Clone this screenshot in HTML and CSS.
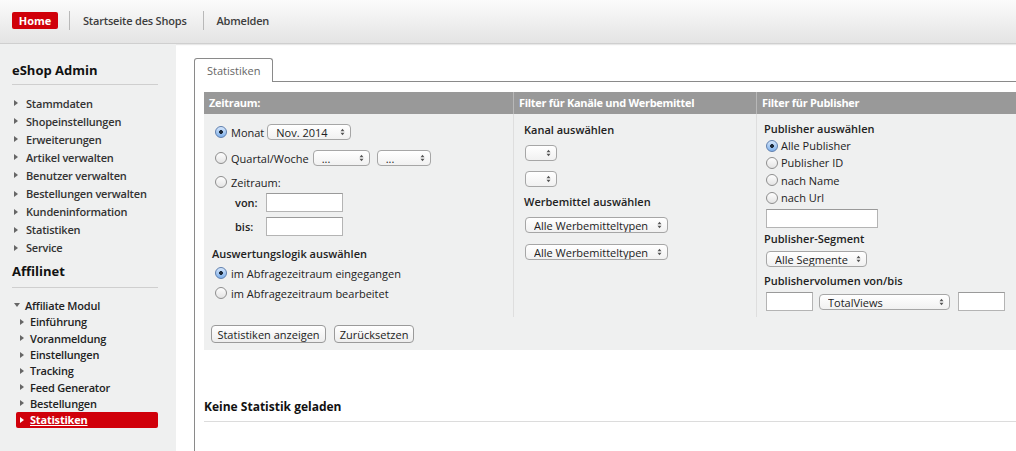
FILE: index.html
```html
<!DOCTYPE html>
<html lang="de">
<head>
<meta charset="utf-8">
<title>eShop Admin – Statistiken</title>
<link rel="stylesheet" href="styles.css">
</head>
<body>
<header class="topbar">
  <a class="home" href="#">Home</a>
  <span class="sep"></span>
  <a class="toplink" href="#">Startseite des Shops</a>
  <span class="sep sep2"></span>
  <a class="toplink" href="#">Abmelden</a>
</header>
<div class="layout">
  <aside class="sidebar">
    <h2 class="side-title first">eShop Admin</h2>
    <ul class="menu">
      <li><span class="tri"></span>Stammdaten</li>
      <li><span class="tri"></span>Shopeinstellungen</li>
      <li><span class="tri"></span>Erweiterungen</li>
      <li><span class="tri"></span>Artikel verwalten</li>
      <li><span class="tri"></span>Benutzer verwalten</li>
      <li><span class="tri"></span>Bestellungen verwalten</li>
      <li><span class="tri"></span>Kundeninformation</li>
      <li><span class="tri"></span>Statistiken</li>
      <li><span class="tri"></span>Service</li>
    </ul>
    <h2 class="side-title second">Affilinet</h2>
    <div class="module"><span class="tri-down"></span>Affiliate Modul</div>
    <ul class="submenu">
      <li><span class="tri"></span>Einführung</li>
      <li><span class="tri"></span>Voranmeldung</li>
      <li><span class="tri"></span>Einstellungen</li>
      <li><span class="tri"></span>Tracking</li>
      <li><span class="tri"></span>Feed Generator</li>
      <li><span class="tri"></span>Bestellungen</li>
      <li class="active"><span class="tri"></span><a href="#">Statistiken</a></li>
    </ul>
  </aside>
  <main class="main">
    <div class="tabstrip"><div class="tab">Statistiken</div><div class="tabline"></div></div>
    <div class="tabpanel">
      <form class="filter">
        <div class="grid">
          <div class="hd">Zeitraum:</div>
          <div class="hd">Filter für Kanäle und Werbemittel</div>
          <div class="hd">Filter für Publisher</div>

          <div class="col col-time">
            <label class="row r1"><input type="radio" name="zr" checked><span class="lbl">Monat</span>
              <span class="sel w83"><select><option>Nov. 2014</option></select><svg class="arr" viewBox="0 0 5 8" width="5" height="8"><path d="M0.5 3.2 2.5 0.8 4.5 3.2ZM0.5 4.8 2.5 7.2 4.5 4.8Z"/></svg></span></label>
            <label class="row r2"><input type="radio" name="zr"><span class="lbl">Quartal/Woche</span>
              <span class="sel w57"><select><option>...</option></select><svg class="arr" viewBox="0 0 5 8" width="5" height="8"><path d="M0.5 3.2 2.5 0.8 4.5 3.2ZM0.5 4.8 2.5 7.2 4.5 4.8Z"/></svg></span>
              <span class="sel w54 gap"><select><option>...</option></select><svg class="arr" viewBox="0 0 5 8" width="5" height="8"><path d="M0.5 3.2 2.5 0.8 4.5 3.2ZM0.5 4.8 2.5 7.2 4.5 4.8Z"/></svg></span></label>
            <label class="row r3"><input type="radio" name="zr"><span class="lbl">Zeitraum:</span></label>
            <div class="daterow d1"><span class="dl">von:</span><input class="txt w77" type="text"></div>
            <div class="daterow d2"><span class="dl">bis:</span><input class="txt w77" type="text"></div>
            <div class="sub s-logic">Auswertungslogik auswählen</div>
            <label class="row r4"><input type="radio" name="lg" checked><span class="lbl">im Abfragezeitraum eingegangen</span></label>
            <label class="row r5"><input type="radio" name="lg"><span class="lbl">im Abfragezeitraum bearbeitet</span></label>
          </div>

          <div class="col col-chan">
            <div class="sub s-kanal">Kanal auswählen</div>
            <div class="selrow k1"><span class="sel w32"><select><option></option></select><svg class="arr" viewBox="0 0 5 8" width="5" height="8"><path d="M0.5 3.2 2.5 0.8 4.5 3.2ZM0.5 4.8 2.5 7.2 4.5 4.8Z"/></svg></span></div>
            <div class="selrow k2"><span class="sel w32"><select><option></option></select><svg class="arr" viewBox="0 0 5 8" width="5" height="8"><path d="M0.5 3.2 2.5 0.8 4.5 3.2ZM0.5 4.8 2.5 7.2 4.5 4.8Z"/></svg></span></div>
            <div class="sub s-werbe">Werbemittel auswählen</div>
            <div class="selrow w1"><span class="sel w143"><select><option>Alle Werbemitteltypen</option></select><svg class="arr" viewBox="0 0 5 8" width="5" height="8"><path d="M0.5 3.2 2.5 0.8 4.5 3.2ZM0.5 4.8 2.5 7.2 4.5 4.8Z"/></svg></span></div>
            <div class="selrow w2"><span class="sel w143"><select><option>Alle Werbemitteltypen</option></select><svg class="arr" viewBox="0 0 5 8" width="5" height="8"><path d="M0.5 3.2 2.5 0.8 4.5 3.2ZM0.5 4.8 2.5 7.2 4.5 4.8Z"/></svg></span></div>
          </div>

          <div class="col col-pub">
            <div class="sub s-pub">Publisher auswählen</div>
            <label class="prow p1"><input type="radio" name="pb" checked><span class="lbl">Alle Publisher</span></label>
            <label class="prow"><input type="radio" name="pb"><span class="lbl">Publisher ID</span></label>
            <label class="prow"><input type="radio" name="pb"><span class="lbl">nach Name</span></label>
            <label class="prow"><input type="radio" name="pb"><span class="lbl">nach Url</span></label>
            <div class="selrow q1"><input class="txt w112" type="text"></div>
            <div class="sub s-seg">Publisher-Segment</div>
            <div class="selrow q2"><span class="sel w101"><select><option>Alle Segmente</option></select><svg class="arr" viewBox="0 0 5 8" width="5" height="8"><path d="M0.5 3.2 2.5 0.8 4.5 3.2ZM0.5 4.8 2.5 7.2 4.5 4.8Z"/></svg></span></div>
            <div class="sub s-vol">Publishervolumen von/bis</div>
            <div class="selrow q3"><input class="txt w47" type="text"><span class="sel w131 gapl"><select><option>TotalViews</option></select><svg class="arr" viewBox="0 0 5 8" width="5" height="8"><path d="M0.5 3.2 2.5 0.8 4.5 3.2ZM0.5 4.8 2.5 7.2 4.5 4.8Z"/></svg></span><input class="txt w47 gapr" type="text"></div>
          </div>
        </div>
        <div class="actions">
          <button type="button" class="btn b1">Statistiken anzeigen</button>
          <button type="button" class="btn b2">Zurücksetzen</button>
        </div>
      </form>
      <h3 class="empty">Keine Statistik geladen</h3>
    </div>
  </main>
</div>
</body>
</html>
```
FILE: styles.css
```css
* { box-sizing: border-box; }
html, body { margin: 0; padding: 0; height: 100%; }
body {
  font-family: "Open Sans", "DejaVu Sans", sans-serif;
  font-size: 11px;
  color: #222;
  background: #fff;
  overflow: hidden;
}

/* top bar */
.topbar {
  height: 44px;
  display: flex;
  align-items: center;
  padding: 0 0 2px 12px;
  background: linear-gradient(#fbfbfb, #e4e4e4);
  border-bottom: 1px solid #cfcfcf;
  box-shadow: 0 1px 1px #e8e8e8;
}
.home {
  display: inline-flex;
  align-items: center;
  justify-content: center;
  width: 46px;
  height: 17px;
  background: #d0000a;
  color: #fff;
  font-weight: 700;
  font-size: 11px;
  border-radius: 2px;
  text-decoration: none;
}
.sep {
  width: 1px;
  height: 19px;
  background: #b8b8b8;
  margin: 0 13px 0 11px;
}
.sep2 { margin-left: 16px; }
.toplink {
  color: #3d3d3d;
  font-weight: 600;
  font-size: 11px;
  letter-spacing: -0.2px;
  text-decoration: none;
}

/* layout */
.layout { display: flex; height: calc(100% - 44px); }
.sidebar {
  width: 176px;
  flex: none;
  background: #eff0f0;
  padding: 0 18px 0 12px;
}
.side-title {
  margin: 0;
  font-size: 13px;
  font-weight: 700;
  color: #111;
  height: 18px;
  line-height: 18px;
  border-bottom: 1px solid #cfcfcf;
  box-sizing: content-box;
}
.side-title.first { margin-top: 17px; margin-bottom: 9px; padding-bottom: 5px; }
.side-title.second { margin-top: 5px; margin-bottom: 9px; padding-bottom: 7px; }
.menu, .submenu { list-style: none; margin: 0; padding: 0; }
.menu li {
  height: 18.1px;
  display: flex;
  align-items: center;
  font-weight: 600;
  color: #333;
  padding-left: 2px;
  letter-spacing: -0.2px;
}
.tri {
  width: 0; height: 0;
  border-left: 4px solid #666;
  border-top: 3px solid transparent;
  border-bottom: 3px solid transparent;
  margin-right: 8px;
}
.module {
  height: 17px;
  display: flex;
  align-items: center;
  font-weight: 600;
  color: #222;
  padding-left: 2px;
  letter-spacing: -0.2px;
}
.tri-down {
  width: 0; height: 0;
  border-top: 4px solid #666;
  border-left: 3px solid transparent;
  border-right: 3px solid transparent;
  margin-right: 5px;
}
.submenu { margin-left: 4px; }
.submenu li {
  height: 16.3px;
  display: flex;
  align-items: center;
  font-weight: 600;
  color: #222;
  padding-left: 4px;
  letter-spacing: -0.2px;
}
.submenu .tri { margin-right: 6px; }
.submenu li.active {
  background: #d0000a;
  border-radius: 2px;
  height: 16px;
}
.submenu li.active .tri { border-left-color: #fff; }
.submenu li.active a { color: #fff; font-weight: 700; text-decoration: underline; }

/* main */
.main {
  flex: 1;
  min-width: 0;
  padding: 14px 0 0 18px;
  display: flex;
  flex-direction: column;
}
.tabstrip { display: flex; align-items: flex-end; height: 24px; }
.tab {
  width: 79px;
  height: 24px;
  border: 1px solid #8a8a8a;
  border-bottom: none;
  border-radius: 3px 3px 0 0;
  color: #666;
  font-size: 11px;
  padding: 4px 0 0 12px;
  background: #fff;
}
.tabline { flex: 1; border-bottom: 1px solid #8a8a8a; }
.tabpanel {
  flex: 1;
  border-left: 1px solid #8a8a8a;
  padding: 10px 0 0 9px;
  overflow: hidden;
}

.filter { background: #eff0f0; width: 820px; }
.grid {
  display: grid;
  grid-template-columns: 309px 243px 1fr;
}
.hd {
  background: #999;
  color: #fff;
  font-weight: 700;
  height: 22px;
  line-height: 22px;
  padding-left: 5px;
  border-left: 1px solid #b8b8b8;
  letter-spacing: -0.3px;
}
.hd:first-child { border-left: none; }
.col { border-left: 1px solid #dedede; padding-bottom: 6px; }
.col-time { border-left: none; padding-left: 11px; }
.col-chan { padding-left: 10px; }
.col-pub { padding-left: 7px; }

.row, .prow { display: flex; align-items: center; height: 18px; }
.r1 { margin-top: 9px; }
.r2 { margin-top: 8px; }
.r3 { margin-top: 6px; }
.r4 { margin-top: 3px; height: 16px; }
.r5 { margin-top: 4px; height: 16px; }
.lbl { margin-left: 4px; color: #222; }
.r1 .sel { margin-left: 3px; }
.r2 .sel { margin-left: 4px; }
.sel.gap { margin-left: 7px; }

input[type="radio"] {
  appearance: none;
  -webkit-appearance: none;
  margin: 0;
  width: 12px;
  height: 12px;
  border-radius: 50%;
  border: 1px solid #8e8e8e;
  background: linear-gradient(#fdfdfd, #e4e4e4);
  flex: none;
}
input[type="radio"]:checked {
  border-color: #5f7fae;
  background: radial-gradient(circle, #1d2a3a 0 1.6px, transparent 2.2px), linear-gradient(#d5e6fb, #7fb0ea);
}

.sel {
  display: inline-flex;
  align-items: center;
  height: 16px;
  border: 1px solid #a6a6a6;
  border-radius: 4px;
  background: linear-gradient(#ffffff, #f1f1f1);
  padding: 0 5px 0 0;
  flex: none;
}
.sel select {
  appearance: none;
  -webkit-appearance: none;
  border: none;
  background: transparent;
  font: inherit;
  color: #222;
  flex: 1;
  min-width: 0;
  height: 14px;
  padding: 0 0 0 8px;
  margin: 0;
  outline: none;
}
.sel .arr { fill: #555; flex: none; }
.w83 { width: 84px; }
.w57 { width: 57px; }
.w54 { width: 54px; }
.w32 { width: 32px; }
.w143 { width: 143px; }
.w101 { width: 101px; }
.w131 { width: 131px; }

.txt {
  height: 19px;
  border: 1px solid #b4b4b4;
  border-top-color: #9a9a9a;
  background: #fff;
  padding: 0 3px;
  margin: 0;
  font: inherit;
}
.w77 { width: 77px; }
.w112 { width: 112px; }
.w47 { width: 47px; }

.daterow { display: flex; align-items: center; padding-left: 20px; }
.d1 { margin-top: 2px; }
.d2 { margin-top: 5px; height: 19px; }
.dl { width: 31px; font-weight: 600; }

.sub { font-weight: 600; color: #222; height: 16px; line-height: 16px; }
.s-logic { margin-top: 10px; margin-left: -3px; }
.s-kanal { margin-top: 8px; }
.selrow { display: flex; align-items: center; }
.k1 { margin-top: 7px; margin-left: 1px; }
.k2 { margin-top: 10px; margin-left: 1px; }
.s-werbe { margin-top: 7px; }
.w1 { margin-top: 7px; margin-left: 1px; }
.w2 { margin-top: 11px; margin-left: 1px; }

.s-pub { margin-top: 7px; }
.prow { height: 17.3px; padding-left: 2px; }
.prow .lbl { margin-left: 3px; }
.p1 { margin-top: 0; }
.q1 { margin-top: 3px; padding-left: 2px; }
.s-seg { margin-top: 3px; }
.q2 { margin-top: 4px; padding-left: 2px; }
.s-vol { margin-top: 6px; }
.q3 { margin-top: 3px; padding-left: 2px; }
.gapl { margin-left: 6px; }
.gapr { margin-left: 8px; }

.actions { padding: 8px 0 7px 7px; display: flex; gap: 8px; height: 33px; }
.btn {
  height: 18px;
  border: 1px solid #9a9a9a;
  border-radius: 4px;
  background: linear-gradient(#ffffff, #ededed);
  font: inherit;
  color: #222;
  padding: 0;
  margin: 0;
}
.b1 { width: 115px; }
.b2 { width: 80px; }

.empty {
  margin: 48px 0 0 0;
  font-size: 12px;
  font-weight: 700;
  color: #111;
  height: 18px;
  line-height: 18px;
  padding-bottom: 5px;
  border-bottom: 1px solid #dcdcdc;
  box-sizing: content-box;
}
```
